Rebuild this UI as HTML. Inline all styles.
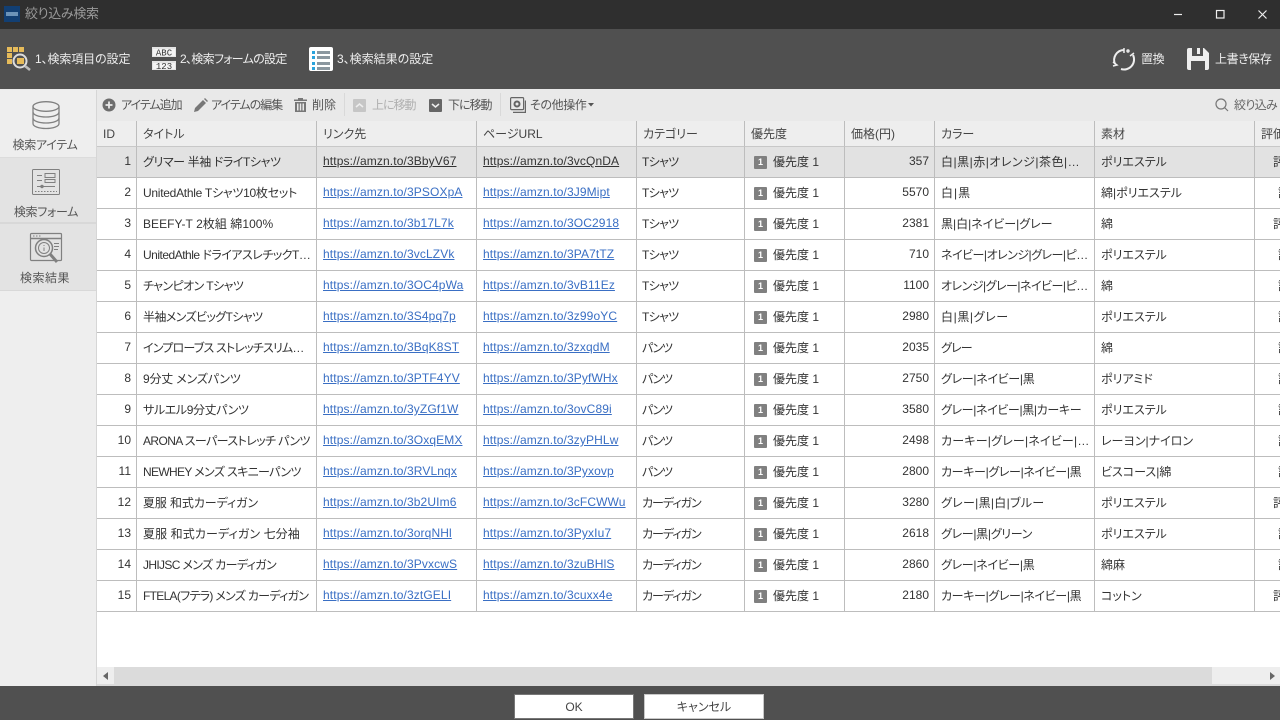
<!DOCTYPE html>
<html lang="ja"><head><meta charset="utf-8"><title>絞り込み検索</title>
<style>
*{box-sizing:border-box}
html,body{margin:0;padding:0;width:1280px;height:720px;overflow:hidden;background:#fff}
body{position:relative;font-family:"Liberation Sans","Noto Sans CJK JP",sans-serif;font-size:12px;color:#333;font-feature-settings:"palt"}
.a{position:absolute;white-space:nowrap}
svg{position:absolute;overflow:visible}
.tb{color:#555;top:97px;line-height:16px}
.top{color:#eee;top:51px;line-height:16px}
.side{color:#555;line-height:16px;text-align:center;left:0;width:96px}
#grid{position:absolute;left:97px;top:121px;width:1183px;height:546px;overflow:hidden;background:#fff}
table{border-collapse:separate;border-spacing:0;table-layout:fixed;width:1283px}
th,td{border-right:1px solid #bdbdbd;border-bottom:1px solid #bdbdbd;padding:0 5px 0 6px;white-space:nowrap;overflow:hidden;text-align:left;font-weight:400}
th{height:26px;background:#eee;color:#444;border-bottom-color:#c8c8c8}
td{height:31px;padding-bottom:2px}
td.r{text-align:right}
td:nth-child(5){padding-left:5px}
tr.s td{background:#e2e2e2}
a{color:#3a6fc4;text-decoration:underline;letter-spacing:.12px}
tr.s a{color:#333}
.b{display:inline-block;width:13px;height:13px;background:#808080;color:#fff;font-size:9px;font-weight:700;text-align:center;line-height:13px;vertical-align:-2px;margin:-6px 6px -6px 3px;border-radius:1px;position:relative;top:-3px}
.f{padding-left:18px}.p{padding-left:23px}
.tx{letter-spacing:-.7px}.pn{letter-spacing:-1.3px}.cd{letter-spacing:-1px}
.btn{position:absolute;top:694px;height:25px;background:#fff;border:1px solid #c8c8c8;text-align:center;line-height:24px;color:#444}
</style></head><body>

<div class="a" style="left:0;top:0;width:1280px;height:29px;background:#2f2f2f"></div>
<div class="a" style="left:0;top:29px;width:1280px;height:60px;background:#505050"></div>
<div class="a" style="left:4px;top:6px;width:16px;height:16px;background:#123f73"></div>
<div class="a" style="left:6px;top:12px;width:12px;height:4px;background:#6c93b8"></div>
<div class="a" style="left:25px;top:6px;color:#9a9a9a;font-size:13px;line-height:16px;letter-spacing:-.3px">絞り込み検索</div>

<svg style="left:1170px;top:6px" width="100" height="16" fill="none" stroke="#eee" stroke-width="1.2">
<path d="M4 8.500H12"/><rect x="46.500" y="4.500" width="7.500" height="7.500"/><path d="M88.500 4.500L96.500 12.500M96.500 4.500L88.500 12.500"/></svg>

<svg style="left:0;top:40px" width="40" height="40">
<g fill="#e6bb5a"><rect x="7" y="7" width="5" height="5"/><rect x="13" y="7" width="5" height="5"/><rect x="19" y="7" width="5" height="5"/><rect x="7" y="13" width="5" height="5"/><rect x="7" y="19" width="5" height="5"/><rect x="17" y="18" width="7" height="6"/></g>
<circle cx="20" cy="21" r="6.500" fill="none" stroke="#ddd" stroke-width="2"/>
<path d="M25 26L30 30" stroke="#bbb" stroke-width="2.500"/></svg>
<div class="a top" style="left:35px;letter-spacing:-.1px">1、検索項目の設定</div>

<svg style="left:152px;top:47px" width="24" height="24">
<rect x="0" y="0" width="24" height="10" fill="#e4e4e4"/><rect x="1" y="2" width="22" height="7" fill="#f4f4f4"/>
<rect x="0" y="14" width="24" height="9" fill="#e4e4e4"/><rect x="1" y="16" width="22" height="6" fill="#f4f4f4"/>
<text x="12" y="8.500" font-family="Liberation Mono" font-size="9" fill="#333" text-anchor="middle">ABC</text>
<text x="12" y="22" font-family="Liberation Mono" font-size="9" fill="#333" text-anchor="middle">123</text></svg>
<div class="a top" style="left:180px;letter-spacing:-.7px">2、検索フォームの設定</div>

<svg style="left:309px;top:47px" width="24" height="24">
<rect width="24" height="24" rx="2" fill="#fff"/>
<g fill="#2ba3dc"><rect x="3" y="4" width="3" height="3"/><rect x="3" y="9" width="3" height="3"/><rect x="3" y="15" width="3" height="3"/><rect x="3" y="20" width="3" height="3"/></g>
<g fill="#8b979f"><rect x="8" y="4" width="13" height="3"/><rect x="8" y="9" width="13" height="3"/><rect x="8" y="15" width="13" height="3"/><rect x="8" y="20" width="13" height="3"/></g></svg>
<div class="a top" style="left:337px">3、検索結果の設定</div>

<svg style="left:1112px;top:48px" width="24" height="24" fill="none" stroke="#eee" stroke-width="2">
<path d="M12 2A10 10 0 0 0 3 16"/><path d="M21 7A10 10 0 0 1 9 21"/>
<path d="M12 0V5" stroke-width="1.500"/><path d="M22 5L18 8" stroke-width="1.500"/><path d="M1 14L5 17L1 18" stroke-width="1.500"/><circle cx="16" cy="3" r=".7"/></svg>
<div class="a top" style="left:1141px;letter-spacing:-.4px">置換</div>
<svg style="left:1187px;top:48px" width="22" height="22">
<path fill-rule="evenodd" fill="#eee" d="M2 0H17L22 5V20Q22 22 20 22H2Q0 22 0 20V2Q0 0 2 0ZM5 0V8H16V0H13V6H10V0ZM4 13V22H18V13Z"/></svg>
<div class="a top" style="left:1215px;letter-spacing:-.4px">上書き保存</div>

<!-- sidebar -->
<div class="a" style="left:0;top:89px;width:1280px;height:597px;background:#e9e9e9"></div>
<div class="a" style="left:0;top:90px;width:96px;height:596px;background:#eee"></div>
<div class="a" style="left:96px;top:90px;width:1px;height:596px;background:#d6d6d6"></div>
<div class="a" style="left:0;top:157px;width:96px;height:67px;background:#e3e3e3;border-top:1px solid #dcdcdc;border-bottom:2px solid #d8d8d8"></div>
<div class="a" style="left:0;top:224px;width:96px;height:67px;background:#e3e3e3;border-bottom:1px solid #d8d8d8"></div>

<svg style="left:32px;top:101px" width="28" height="30" fill="none" stroke="#808080" stroke-width="1.300">
<ellipse cx="14" cy="5.500" rx="13" ry="4.800"/><path d="M1 5.500V22.500C1 25.500 7 27.500 14 27.500S27 25.500 27 22.500V5.500"/>
<path d="M1 11C1 14 7 16 14 16S27 14 27 11M1 17C1 20 7 22 14 22S27 20 27 17"/></svg>
<div class="a side" style="top:137px;left:-3px;letter-spacing:-.3px">検索アイテム</div>

<svg style="left:32px;top:169px" width="28" height="26" fill="none" stroke="#808080">
<rect x=".5" y=".5" width="27" height="25" rx="1"/>
<path d="M5 6.500H10M5 11.500H10M13 4.500H23V8.500H13ZM13 10.500H23V13.500H13ZM5 17.500H23"/>
<circle cx="10" cy="17.500" r="1.200" fill="#808080"/><path d="M3 22.500H25" stroke-dasharray="1.500 1.500"/></svg>
<div class="a side" style="top:204px;left:-2px;letter-spacing:-.3px">検索フォーム</div>

<svg style="left:30px;top:233px" width="34" height="34" fill="none" stroke="#808080">
<rect x=".5" y=".5" width="31" height="27" rx="1" stroke-width="1.200"/><path d="M.5 5.500H31.500" stroke-width="1.500"/>
<path d="M3 3H12" stroke-dasharray="1.500 1.500"/><path d="M24 10.500H29M24 13.500H29M24 16.500H28"/>
<circle cx="14" cy="15" r="8.500" stroke-width="1.500"/><circle cx="14" cy="15" r="5.500"/>
<path d="M14 13V12M14 14.500V18"/><path d="M20 21L27 29" stroke-width="3"/></svg>
<div class="a side" style="top:270px;left:-3px;letter-spacing:.5px">検索結果</div>

<!-- toolbar -->
<svg style="left:102px;top:98px" width="14" height="14"><circle cx="7" cy="7" r="6.500" fill="#6d6d6d"/><path d="M3.500 7H10.500M7 3.500V10.500" stroke="#e9e9e9" stroke-width="1.800"/></svg>
<div class="a tb" style="left:121px;letter-spacing:-1px">アイテム追加</div>
<svg style="left:194px;top:98px" width="14" height="14" fill="#777"><path d="M0 14L1 10L9 2L12 5L4 13ZM10 1L11 0L14 3L13 4Z"/></svg>
<div class="a tb" style="left:211px;letter-spacing:-1px">アイテムの編集</div>
<svg style="left:294px;top:98px" width="13" height="14" fill="#777"><rect y="1.500" width="13" height="1.500"/><rect x="4" width="5" height="2"/><path fill-rule="evenodd" d="M1 4H12V14H1ZM3 5.500V12.500H4.500V5.500ZM5.800 5.500V12.500H7.200V5.500ZM8.500 5.500V12.500H10V5.500Z"/></svg>
<div class="a tb" style="left:312px">削除</div>
<div class="a" style="left:344px;top:93px;width:1px;height:23px;background:#d9d9d9"></div>
<svg style="left:353px;top:99px" width="13" height="13"><rect width="13" height="13" rx="1" fill="#c6c6c6"/><path d="M3 8L6.500 5L10 8" stroke="#eee" stroke-width="1.600" fill="none"/></svg>
<div class="a tb" style="left:372px;color:#b0b0b0;letter-spacing:-1px">上に移動</div>
<svg style="left:429px;top:99px" width="13" height="13"><rect width="13" height="13" rx="1" fill="#666"/><path d="M3 5L6.500 8L10 5" stroke="#eee" stroke-width="1.600" fill="none"/></svg>
<div class="a tb" style="left:448px;letter-spacing:-1px">下に移動</div>
<div class="a" style="left:500px;top:93px;width:1px;height:23px;background:#d9d9d9"></div>
<svg style="left:510px;top:97px" width="16" height="16" fill="none" stroke="#666" stroke-width="1.200"><rect x=".6" y=".6" width="13" height="12" rx="1"/><path d="M3 15.400H15.400V3.500"/><circle cx="7" cy="7" r="2.500" stroke-width="2"/></svg>
<div class="a tb" style="left:530px;letter-spacing:-.4px">その他操作</div>
<svg style="left:588px;top:103px" width="6" height="4"><path d="M0 0H6L3 3.500Z" fill="#555"/></svg>
<svg style="left:1215px;top:98px" width="14" height="14" fill="none" stroke="#777" stroke-width="1.200"><circle cx="6" cy="6" r="5"/><path d="M9.500 9.500L13 13"/></svg>
<div class="a tb" style="left:1234px;color:#666;letter-spacing:-.7px">絞り込み</div>

<!-- grid -->
<div id="grid">
<table>
<colgroup><col style="width:40px"><col style="width:180px"><col style="width:160px"><col style="width:160px"><col style="width:108px"><col style="width:100px"><col style="width:90px"><col style="width:160px"><col style="width:160px"><col style="width:125px"></colgroup>
<tr><th>ID</th><th>タイトル</th><th>リンク先</th><th>ページURL</th><th>カテゴリー</th><th>優先度</th><th>価格(円)</th><th>カラー</th><th>素材</th><th>評価</th></tr>
<tr class="s"><td class="r">1</td><td style="letter-spacing:-.4px">グリマー 半袖 ドライTシャツ</td><td><a>https://amzn.to/3BbyV67</a></td><td><a>https://amzn.to/3vcQnDA</a></td><td class="tx">Tシャツ</td><td><span class="b">1</span>優先度 1</td><td class="r">357</td><td style="letter-spacing:.5px">白|黒|赤|オレンジ|茶色|…</td><td>ポリエステル</td><td class="f">評価</td></tr>
<tr><td class="r">2</td><td style="letter-spacing:-.27px">UnitedAthle Tシャツ10枚セット</td><td><a>https://amzn.to/3PSOXpA</a></td><td><a>https://amzn.to/3J9Mipt</a></td><td class="tx">Tシャツ</td><td><span class="b">1</span>優先度 1</td><td class="r">5570</td><td style="letter-spacing:1px">白|黒</td><td>綿|ポリエステル</td><td class="p">評価</td></tr>
<tr><td class="r">3</td><td style="letter-spacing:.05px">BEEFY-T 2枚組 綿100%</td><td><a>https://amzn.to/3b17L7k</a></td><td><a>https://amzn.to/3OC2918</a></td><td class="tx">Tシャツ</td><td><span class="b">1</span>優先度 1</td><td class="r">2381</td><td>黒|白|ネイビー|グレー</td><td>綿</td><td class="f">評価</td></tr>
<tr><td class="r">4</td><td style="letter-spacing:-.5px">UnitedAthle ドライアスレチックT…</td><td><a>https://amzn.to/3vcLZVk</a></td><td><a>https://amzn.to/3PA7tTZ</a></td><td class="tx">Tシャツ</td><td><span class="b">1</span>優先度 1</td><td class="r">710</td><td style="letter-spacing:-.5px">ネイビー|オレンジ|グレー|ピ…</td><td>ポリエステル</td><td class="p">評価</td></tr>
<tr><td class="r">5</td><td style="letter-spacing:-.6px">チャンピオン Tシャツ</td><td><a>https://amzn.to/3OC4pWa</a></td><td><a>https://amzn.to/3vB11Ez</a></td><td class="tx">Tシャツ</td><td><span class="b">1</span>優先度 1</td><td class="r">1100</td><td style="letter-spacing:-.5px">オレンジ|グレー|ネイビー|ピ…</td><td>綿</td><td class="p">評価</td></tr>
<tr><td class="r">6</td><td style="letter-spacing:-.6px">半袖メンズビッグTシャツ</td><td><a>https://amzn.to/3S4pq7p</a></td><td><a>https://amzn.to/3z99oYC</a></td><td class="tx">Tシャツ</td><td><span class="b">1</span>優先度 1</td><td class="r">2980</td><td style="letter-spacing:.6px">白|黒|グレー</td><td>ポリエステル</td><td class="p">評価</td></tr>
<tr><td class="r">7</td><td style="letter-spacing:-.8px">インプローブス ストレッチスリム…</td><td><a>https://amzn.to/3BqK8ST</a></td><td><a>https://amzn.to/3zxqdM</a></td><td class="pn">パンツ</td><td><span class="b">1</span>優先度 1</td><td class="r">2035</td><td style="letter-spacing:-.8px">グレー</td><td>綿</td><td class="p">評価</td></tr>
<tr><td class="r">8</td><td style="letter-spacing:-.2px">9分丈 メンズパンツ</td><td><a>https://amzn.to/3PTF4YV</a></td><td><a>https://amzn.to/3PyfWHx</a></td><td class="pn">パンツ</td><td><span class="b">1</span>優先度 1</td><td class="r">2750</td><td style="letter-spacing:-.3px">グレー|ネイビー|黒</td><td>ポリアミド</td><td class="p">評価</td></tr>
<tr><td class="r">9</td><td style="letter-spacing:-.4px">サルエル9分丈パンツ</td><td><a>https://amzn.to/3yZGf1W</a></td><td><a>https://amzn.to/3ovC89i</a></td><td class="pn">パンツ</td><td><span class="b">1</span>優先度 1</td><td class="r">3580</td><td style="letter-spacing:-.35px">グレー|ネイビー|黒|カーキー</td><td>ポリエステル</td><td class="p">評価</td></tr>
<tr><td class="r">10</td><td style="letter-spacing:-.6px">ARONA スーパーストレッチ パンツ</td><td><a>https://amzn.to/3OxqEMX</a></td><td><a>https://amzn.to/3zyPHLw</a></td><td class="pn">パンツ</td><td><span class="b">1</span>優先度 1</td><td class="r">2498</td><td style="letter-spacing:.2px">カーキー|グレー|ネイビー|…</td><td>レーヨン|ナイロン</td><td class="p">評価</td></tr>
<tr><td class="r">11</td><td style="letter-spacing:-.65px">NEWHEY メンズ スキニーパンツ</td><td><a>https://amzn.to/3RVLnqx</a></td><td><a>https://amzn.to/3Pyxovp</a></td><td class="pn">パンツ</td><td><span class="b">1</span>優先度 1</td><td class="r">2800</td><td style="letter-spacing:-.35px">カーキー|グレー|ネイビー|黒</td><td>ビスコース|綿</td><td class="p">評価</td></tr>
<tr><td class="r">12</td><td style="letter-spacing:-.1px">夏服 和式カーディガン</td><td><a>https://amzn.to/3b2UIm6</a></td><td><a>https://amzn.to/3cFCWWu</a></td><td class="cd">カーディガン</td><td><span class="b">1</span>優先度 1</td><td class="r">3280</td><td style="letter-spacing:.3px">グレー|黒|白|ブルー</td><td>ポリエステル</td><td class="f">評価</td></tr>
<tr><td class="r">13</td><td style="letter-spacing:.1px">夏服 和式カーディガン 七分袖</td><td><a>https://amzn.to/3orqNHl</a></td><td><a>https://amzn.to/3PyxIu7</a></td><td class="cd">カーディガン</td><td><span class="b">1</span>優先度 1</td><td class="r">2618</td><td style="letter-spacing:-.3px">グレー|黒|グリーン</td><td>ポリエステル</td><td class="p">評価</td></tr>
<tr><td class="r">14</td><td style="letter-spacing:-.65px">JHIJSC メンズ カーディガン</td><td><a>https://amzn.to/3PvxcwS</a></td><td><a>https://amzn.to/3zuBHlS</a></td><td class="cd">カーディガン</td><td><span class="b">1</span>優先度 1</td><td class="r">2860</td><td style="letter-spacing:-.3px">グレー|ネイビー|黒</td><td>綿麻</td><td class="p">評価</td></tr>
<tr><td class="r">15</td><td style="letter-spacing:-.7px">FTELA(フテラ) メンズ カーディガン</td><td><a>https://amzn.to/3ztGELI</a></td><td><a>https://amzn.to/3cuxx4e</a></td><td class="cd">カーディガン</td><td><span class="b">1</span>優先度 1</td><td class="r">2180</td><td style="letter-spacing:-.35px">カーキー|グレー|ネイビー|黒</td><td>コットン</td><td class="f">評価</td></tr>
</table>
</div>

<!-- scrollbar -->
<div class="a" style="left:97px;top:667px;width:1183px;height:19px;background:#dbdbdb"></div>
<div class="a" style="left:97px;top:667px;width:17px;height:17px;background:#eee"></div>
<div class="a" style="left:1212px;top:667px;width:68px;height:17px;background:#eee"></div>
<svg style="left:103px;top:672px" width="6" height="8"><path d="M5 0V8L0 4Z" fill="#666"/></svg>
<svg style="left:1270px;top:672px" width="6" height="8"><path d="M0 0V8L5 4Z" fill="#666"/></svg>

<!-- footer -->
<div class="a" style="left:0;top:686px;width:1280px;height:34px;background:#505050"></div>
<div class="btn" style="left:514px;width:120px;border-color:#777">OK</div>
<div class="btn" style="left:644px;width:120px">キャンセル</div>
</body></html>
